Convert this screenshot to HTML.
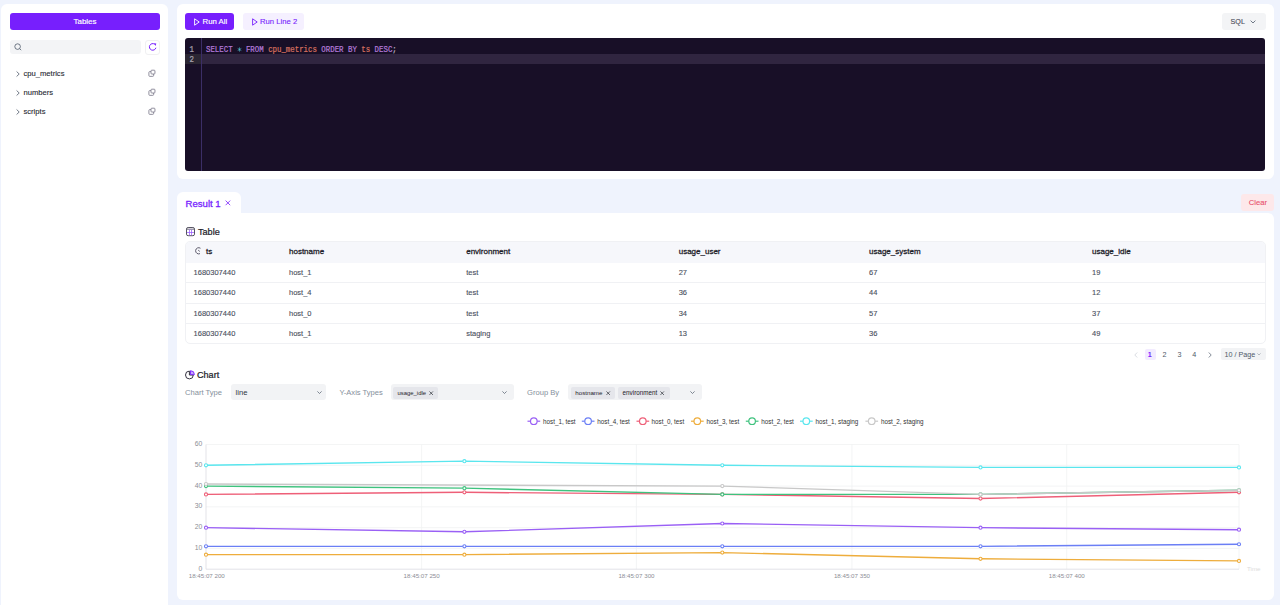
<!DOCTYPE html>
<html><head><meta charset="utf-8">
<style>
*{box-sizing:border-box;margin:0;padding:0}
html,body{width:1280px;height:605px;overflow:hidden;background:#eff3fd;font-family:"Liberation Sans",sans-serif;color:#1d2129}
.abs{position:absolute;white-space:nowrap}
.panel{position:absolute;background:#fff;border-radius:6px}
.btn{position:absolute;border-radius:3px;display:flex;align-items:center;justify-content:center;font-size:8px;white-space:nowrap}
.mono{font-family:"Liberation Mono",monospace}
.t{position:absolute;white-space:nowrap;line-height:1}
svg{position:absolute;overflow:visible}
.tree{position:absolute;left:23.5px;font-size:7.6px;color:#272a33;-webkit-text-stroke:0.12px #272a33;line-height:1}
.hl{position:absolute;height:1px;left:185px;width:1081px;background:#f0f1f4}
.c{position:absolute;font-size:7.5px;color:#4a5060;-webkit-text-stroke:0.12px #4a5060;line-height:1;white-space:nowrap}
.h{position:absolute;font-size:8px;color:#1d2129;-webkit-text-stroke:0.28px #1d2129;line-height:1;white-space:nowrap}
.kw{color:#b27ad9}.id{color:#d6705f}.op{color:#4fbfd0}.pn{color:#b7b2c0}
.lbl{position:absolute;font-size:7.6px;color:#86909c;line-height:1;white-space:nowrap;top:389px!important}
.sel{position:absolute;background:#f2f3f5;border-radius:3px;top:384px;height:16px}
.tag{position:absolute;background:#e5e6eb;border-radius:2px;top:386.6px;height:12.2px;font-size:5.9px;color:#1d2129;line-height:12.4px;padding-left:4.5px;white-space:nowrap}
.lg{position:absolute;top:418.8px;font-size:6.3px;color:#333;line-height:1;white-space:nowrap}
.ax{position:absolute;font-size:6.2px;color:#8c8e96;line-height:1;white-space:nowrap}
</style></head>
<body>
<!-- ============ SIDEBAR ============ -->
<div class="panel" style="left:1px;top:4px;width:167px;height:620px"></div>
<div class="btn" style="left:10px;top:13px;width:150px;height:17px;background:#771ffd;color:#fff;-webkit-text-stroke:0.15px #fff">Tables</div>
<div class="abs" style="left:10px;top:40px;width:131px;height:14px;background:#f3f4f6;border-radius:3px"></div>
<svg style="left:14px;top:43px" width="8" height="8" viewBox="0 0 8 8"><circle cx="3.6" cy="3.6" r="2.8" fill="none" stroke="#4e5969" stroke-width="0.8"/><path d="M5.6 5.6L7.2 7.2" stroke="#4e5969" stroke-width="0.8"/></svg>
<div class="abs" style="left:145.3px;top:39.5px;width:15.1px;height:15px;border:1px solid #f0f0f2;border-radius:3px;background:#fff"></div>
<svg style="left:149px;top:43px" width="8" height="8" viewBox="0 0 8 8"><path d="M6.9 4.75A3.3 3.3 0 1 1 5.6 1.2" fill="none" stroke="#771ffd" stroke-width="1"/><path d="M4.9 0.2L7.3 0.5L6.5 2.9Z" fill="#771ffd"/></svg>

<svg style="left:16px;top:71px" width="4" height="6" viewBox="0 0 4 6"><path d="M0.6 0.5L3.2 3L0.6 5.5" fill="none" stroke="#4e5969" stroke-width="0.8"/></svg>
<div class="tree" style="top:69.5px">cpu_metrics</div>
<svg style="left:16px;top:90px" width="4" height="6" viewBox="0 0 4 6"><path d="M0.6 0.5L3.2 3L0.6 5.5" fill="none" stroke="#4e5969" stroke-width="0.8"/></svg>
<div class="tree" style="top:88.8px">numbers</div>
<svg style="left:16px;top:109px" width="4" height="6" viewBox="0 0 4 6"><path d="M0.6 0.5L3.2 3L0.6 5.5" fill="none" stroke="#4e5969" stroke-width="0.8"/></svg>
<div class="tree" style="top:108px">scripts</div>
<svg style="left:147.5px;top:69px" width="8" height="8" viewBox="0 0 8 8"><rect x="3" y="1.2" width="3.95" height="3.8" rx="0.8" fill="none" stroke="#7d7b8c" stroke-width="0.85"/><path d="M3 2.6H1.7A0.8 0.8 0 0 0 0.9 3.4V6.55A0.8 0.8 0 0 0 1.7 7.35H4.8A0.8 0.8 0 0 0 5.6 6.55V5" fill="none" stroke="#7d7b8c" stroke-width="0.85"/></svg>
<svg style="left:147.5px;top:88px" width="8" height="8" viewBox="0 0 8 8"><rect x="3" y="1.2" width="3.95" height="3.8" rx="0.8" fill="none" stroke="#7d7b8c" stroke-width="0.85"/><path d="M3 2.6H1.7A0.8 0.8 0 0 0 0.9 3.4V6.55A0.8 0.8 0 0 0 1.7 7.35H4.8A0.8 0.8 0 0 0 5.6 6.55V5" fill="none" stroke="#7d7b8c" stroke-width="0.85"/></svg>
<svg style="left:147.5px;top:107px" width="8" height="8" viewBox="0 0 8 8"><rect x="3" y="1.2" width="3.95" height="3.8" rx="0.8" fill="none" stroke="#7d7b8c" stroke-width="0.85"/><path d="M3 2.6H1.7A0.8 0.8 0 0 0 0.9 3.4V6.55A0.8 0.8 0 0 0 1.7 7.35H4.8A0.8 0.8 0 0 0 5.6 6.55V5" fill="none" stroke="#7d7b8c" stroke-width="0.85"/></svg>

<!-- ============ EDITOR PANEL ============ -->
<div class="panel" style="left:177px;top:4px;width:1097px;height:174.5px"></div>
<div class="btn" style="left:185px;top:13px;width:49px;height:17px;background:#771ffd;color:#fff;"></div>
<svg style="left:193.5px;top:17.5px" width="6" height="8" viewBox="0 0 6 8"><path d="M0.6 0.8L5.2 4L0.6 7.2Z" fill="none" stroke="#fff" stroke-width="0.9" stroke-linejoin="round"/></svg>
<div class="t" style="left:202.5px;top:17.8px;font-size:7.8px;color:#fff;-webkit-text-stroke:0.15px #fff">Run All</div>
<div class="btn" style="left:243px;top:13px;width:61px;height:17px;background:#f5f0ff;"></div>
<svg style="left:251.5px;top:17.5px" width="6" height="8" viewBox="0 0 6 8"><path d="M0.6 0.8L5.2 4L0.6 7.2Z" fill="none" stroke="#771ffd" stroke-width="0.9" stroke-linejoin="round"/></svg>
<div class="t" style="left:260px;top:17.8px;font-size:7.7px;color:#771ffd;-webkit-text-stroke:0.12px #771ffd">Run Line 2</div>
<div class="btn" style="left:1222px;top:13px;width:44px;height:17px;background:#f3f4f6;"></div>
<div class="t" style="left:1230.5px;top:18.2px;font-size:7.2px;color:#4b4a5a;-webkit-text-stroke:0.12px #4b4a5a">SQL</div>
<svg style="left:1250px;top:19.5px" width="6" height="4" viewBox="0 0 6 4"><path d="M0.6 0.6L3 3L5.4 0.6" fill="none" stroke="#4e5969" stroke-width="0.8"/></svg>

<div class="abs" style="left:185px;top:38px;width:1080px;height:133px;background:#180f27;border-radius:3px;overflow:hidden">
  <div class="abs" style="left:0;top:15.8px;width:1081px;height:10.6px;background:#302540"></div>
  <div class="abs" style="left:0;top:15.8px;width:16px;height:10.6px;background:#2b2633"></div>
  <div class="abs" style="left:16px;top:0;width:1px;height:133px;background:#3b2e66"></div>
  <div class="t mono" style="left:4.6px;top:8.8px;font-size:7.4px;color:#a9a4b0;transform:scaleY(1.12);-webkit-text-stroke:0.2px #a9a4b0">1</div>
  <div class="t mono" style="left:4.6px;top:19.2px;font-size:7.4px;color:#a9a4b0;transform:scaleY(1.12);-webkit-text-stroke:0.2px #a9a4b0">2</div>
  <div class="t mono" style="left:21px;top:8.8px;font-size:7.4px;transform:scaleY(1.12);-webkit-text-stroke:0.2px currentColor;white-space:pre"><span class="kw">SELECT</span>   <span class="kw">FROM</span> <span class="id">cpu_metrics</span> <span class="kw">ORDER BY</span> <span class="id">ts</span> <span class="kw">DESC</span><span class="pn">;</span></div>
  <svg style="left:52px;top:8.6px" width="5" height="5" viewBox="0 0 10 10"><path d="M5 0.8V9.2M1.4 2.9L8.6 7.1M1.4 7.1L8.6 2.9" stroke="#4fbfd0" stroke-width="1.3"/></svg>
</div>

<!-- ============ RESULT TAB ============ -->
<div class="abs" style="left:177px;top:191.7px;width:64px;height:22px;background:#fff;border-radius:6px 6px 0 0"></div>
<div class="t" style="left:185.5px;top:198.6px;font-size:9.6px;color:#771ffd;-webkit-text-stroke:0.3px #771ffd">Result 1</div>
<svg style="left:225px;top:200.2px" width="6" height="6" viewBox="0 0 6 6"><path d="M0.6 0.6L5.2 5.2M5.2 0.6L0.6 5.2" stroke="#771ffd" stroke-width="0.8"/></svg>
<div class="btn" style="left:1240.5px;top:194px;width:33.5px;height:17px;background:#fde8ea;"></div>
<div class="t" style="left:1248.8px;top:198.8px;font-size:7.6px;color:#e9516f;-webkit-text-stroke:0.12px #e9516f">Clear</div>

<!-- ============ RESULTS PANEL ============ -->
<div class="panel" style="left:177px;top:213px;width:1097px;height:386.8px;border-radius:0 6px 6px 6px"></div>
<svg style="left:186px;top:227px" width="9" height="9" viewBox="0 0 9 9"><rect x="0.5" y="0.5" width="8" height="8.2" rx="1.6" fill="none" stroke="#4e4b5c" stroke-width="0.95"/><path d="M0.6 2.2H8.4" stroke="#4e4b5c" stroke-width="0.8"/><path d="M1 5.5H8M3.5 2.6V8.3M5.5 2.6V8.3" stroke="#9b5cff" stroke-width="0.75"/></svg>
<div class="t" style="left:198px;top:227.8px;font-size:9.1px;color:#1d2129;-webkit-text-stroke:0.22px #1d2129">Table</div>

<!-- table -->
<div class="abs" style="left:185px;top:241.3px;width:1081px;height:102.7px;border:1px solid #f0f1f4;border-radius:5px;overflow:hidden">
  <div class="abs" style="left:0;top:0;width:1081px;height:20.5px;background:#f6f7fb"></div>
</div>
<div class="hl" style="top:282.1px"></div>
<div class="hl" style="top:302.8px"></div>
<div class="hl" style="top:323.2px"></div>
<svg style="left:194.5px;top:247px" width="8" height="8" viewBox="0 0 8 8"><path d="M5.48 1.26A3.1 3.1 0 1 0 5.01 6.61" fill="none" stroke="#4e4b5c" stroke-width="0.9"/><path d="M3.1 3.1L4.9 4.5" stroke="#4e4b5c" stroke-width="0.8"/></svg>
<div class="h" style="left:206px;top:248px">ts</div>
<div class="h" style="left:289px;top:248px">hostname</div>
<div class="h" style="left:466.2px;top:248px">environment</div>
<div class="h" style="left:678.7px;top:248px">usage_user</div>
<div class="h" style="left:869px;top:248px">usage_system</div>
<div class="h" style="left:1092px;top:248px">usage_idle</div>

<div class="c" style="left:193.6px;top:268.6px">1680307440</div>
<div class="c" style="left:289px;top:268.6px">host_1</div>
<div class="c" style="left:466.2px;top:268.6px">test</div>
<div class="c" style="left:678.7px;top:268.6px">27</div>
<div class="c" style="left:869px;top:268.6px">67</div>
<div class="c" style="left:1092px;top:268.6px">19</div>

<div class="c" style="left:193.6px;top:289.2px">1680307440</div>
<div class="c" style="left:289px;top:289.2px">host_4</div>
<div class="c" style="left:466.2px;top:289.2px">test</div>
<div class="c" style="left:678.7px;top:289.2px">36</div>
<div class="c" style="left:869px;top:289.2px">44</div>
<div class="c" style="left:1092px;top:289.2px">12</div>

<div class="c" style="left:193.6px;top:309.7px">1680307440</div>
<div class="c" style="left:289px;top:309.7px">host_0</div>
<div class="c" style="left:466.2px;top:309.7px">test</div>
<div class="c" style="left:678.7px;top:309.7px">34</div>
<div class="c" style="left:869px;top:309.7px">57</div>
<div class="c" style="left:1092px;top:309.7px">37</div>

<div class="c" style="left:193.6px;top:330.2px">1680307440</div>
<div class="c" style="left:289px;top:330.2px">host_1</div>
<div class="c" style="left:466.2px;top:330.2px">staging</div>
<div class="c" style="left:678.7px;top:330.2px">13</div>
<div class="c" style="left:869px;top:330.2px">36</div>
<div class="c" style="left:1092px;top:330.2px">49</div>

<!-- pagination -->
<svg style="left:1134px;top:351.5px" width="4" height="6" viewBox="0 0 4 6"><path d="M3.2 0.5L0.8 3L3.2 5.5" fill="none" stroke="#c9cdd4" stroke-width="0.7"/></svg>
<div class="abs" style="left:1144.5px;top:348.5px;width:11.5px;height:11.5px;background:#f2ebff;border-radius:2px"></div>
<div class="t" style="left:1147.8px;top:350.8px;font-size:7.2px;color:#771ffd;font-weight:bold">1</div>
<div class="t" style="left:1162.5px;top:350.8px;font-size:7.2px;color:#4e5969">2</div>
<div class="t" style="left:1177.5px;top:350.8px;font-size:7.2px;color:#4e5969">3</div>
<div class="t" style="left:1192.3px;top:350.8px;font-size:7.2px;color:#4e5969">4</div>
<svg style="left:1208px;top:351.5px" width="4" height="6" viewBox="0 0 4 6"><path d="M0.8 0.5L3.2 3L0.8 5.5" fill="none" stroke="#4e5969" stroke-width="0.7"/></svg>
<div class="abs" style="left:1220.5px;top:348.3px;width:45px;height:12px;background:#f2f3f5;border-radius:2px"></div>
<div class="t" style="left:1224.5px;top:350.8px;font-size:7.2px;color:#4e5969">10 / Page</div>
<svg style="left:1257px;top:353px" width="4" height="3" viewBox="0 0 4 3"><path d="M0.4 0.4L2 2L3.6 0.4" fill="none" stroke="#86909c" stroke-width="0.6"/></svg>

<!-- ============ CHART ============ -->
<svg style="left:185px;top:369.5px" width="11" height="11" viewBox="0 0 11 11"><path d="M4.4 1.1A3.9 3.9 0 1 0 8.3 5H4.4Z" fill="none" stroke="#2b2838" stroke-width="0.95" stroke-linejoin="round"/><path d="M5.5 4.6V0.7A3.9 3.9 0 0 1 9.4 4.6Z" fill="#c8a6ff" stroke="#771ffd" stroke-width="0.9" stroke-linejoin="round"/></svg>
<div class="t" style="left:197px;top:370.7px;font-size:9.1px;color:#1d2129;-webkit-text-stroke:0.22px #1d2129">Chart</div>

<div class="lbl" style="left:185px;top:388.3px">Chart Type</div>
<div class="sel" style="left:231.2px;width:95px"></div>
<div class="t" style="left:235.6px;top:389px;font-size:7.6px;color:#2f3340">line</div>
<svg style="left:316.5px;top:390.5px" width="5" height="3" viewBox="0 0 5 3"><path d="M0.4 0.4L2.5 2.5L4.6 0.4" fill="none" stroke="#4e5969" stroke-width="0.7"/></svg>

<div class="lbl" style="left:339.4px;top:388.3px">Y-Axis Types</div>
<div class="sel" style="left:390.6px;width:123.4px"></div>
<div class="tag" style="left:393px;width:45.3px">usage_idle</div>
<svg style="left:429.2px;top:390.6px" width="4.4" height="4.4" viewBox="0 0 5 5"><path d="M0.5 0.5L4.5 4.5M4.5 0.5L0.5 4.5" stroke="#1d2129" stroke-width="0.75"/></svg>
<svg style="left:501.9px;top:390.5px" width="5" height="3" viewBox="0 0 5 3"><path d="M0.4 0.4L2.5 2.5L4.6 0.4" fill="none" stroke="#4e5969" stroke-width="0.7"/></svg>

<div class="lbl" style="left:527px;top:388.3px">Group By</div>
<div class="sel" style="left:568.1px;width:133.9px"></div>
<div class="tag" style="left:570.8px;width:44.5px;font-size:6.2px">hostname</div>
<svg style="left:605.7px;top:390.6px" width="4.4" height="4.4" viewBox="0 0 5 5"><path d="M0.5 0.5L4.5 4.5M4.5 0.5L0.5 4.5" stroke="#1d2129" stroke-width="0.75"/></svg>
<div class="tag" style="left:618.1px;width:52.2px;font-size:6.3px">environment</div>
<svg style="left:660.3px;top:390.6px" width="4.4" height="4.4" viewBox="0 0 5 5"><path d="M0.5 0.5L4.5 4.5M4.5 0.5L0.5 4.5" stroke="#1d2129" stroke-width="0.75"/></svg>
<svg style="left:690px;top:390.5px" width="5" height="3" viewBox="0 0 5 3"><path d="M0.4 0.4L2.5 2.5L4.6 0.4" fill="none" stroke="#4e5969" stroke-width="0.7"/></svg>

<!-- legend -->
<svg style="left:0;top:0" width="1280" height="605" viewBox="0 0 1280 605">
  <g stroke-width="1.2" fill="#fff">
    <path d="M527.5 421.2H540.2" stroke="#9a60f5"/><circle cx="533.8" cy="421.2" r="3.3" stroke="#9a60f5"/>
    <path d="M581.8 421.2H594.5" stroke="#6b7ff5"/><circle cx="588.1" cy="421.2" r="3.3" stroke="#6b7ff5"/>
    <path d="M636.5 421.2H649.2" stroke="#ee5f78"/><circle cx="642.8" cy="421.2" r="3.3" stroke="#ee5f78"/>
    <path d="M691 421.2H703.7" stroke="#eead3c"/><circle cx="697.3" cy="421.2" r="3.3" stroke="#eead3c"/>
    <path d="M745.8 421.2H758.5" stroke="#3fc27e"/><circle cx="752.1" cy="421.2" r="3.3" stroke="#3fc27e"/>
    <path d="M800 421.2H812.7" stroke="#5ae6ee"/><circle cx="806.3" cy="421.2" r="3.3" stroke="#5ae6ee"/>
    <path d="M865.4 421.2H878.1" stroke="#c8c8c8"/><circle cx="871.7" cy="421.2" r="3.3" stroke="#c8c8c8"/>
  </g>
</svg>
<div class="lg" style="left:543px">host_1, test</div>
<div class="lg" style="left:597.3px">host_4, test</div>
<div class="lg" style="left:651.6px">host_0, test</div>
<div class="lg" style="left:706.6px">host_3, test</div>
<div class="lg" style="left:761.3px">host_2, test</div>
<div class="lg" style="left:815.6px">host_1, staging</div>
<div class="lg" style="left:880.9px">host_2, staging</div>

<!-- chart plot -->
<svg id="plot" style="left:0;top:0" width="1280" height="605" viewBox="0 0 1280 605">
  <g stroke="#f0f1f3" stroke-width="0.8">
    <path d="M206 548.42H1239M206 527.64H1239M206 506.86H1239M206 486.08H1239M206 465.3H1239M206 444.52H1239"/>
    <path d="M421.6 444.52V569.2M636.4 444.52V569.2M851.9 444.52V569.2M1066.7 444.52V569.2M1239 444.52V569.2"/>
  </g>
  <path d="M1239 569.2H206V444.52" fill="none" stroke="#dcdce2" stroke-width="0.8"/>
  <g><polyline fill="none" stroke-width="1.4" stroke-linejoin="round" stroke="#9a60f5" points="206,527.64 464.4,531.8 722.3,523.48 980.5,527.64 1239,529.72"/>
    <circle cx="206" cy="527.64" r="1.55" fill="#fff" stroke-width="1.1" stroke="#9a60f5"/>
    <circle cx="464.4" cy="531.8" r="1.55" fill="#fff" stroke-width="1.1" stroke="#9a60f5"/>
    <circle cx="722.3" cy="523.48" r="1.55" fill="#fff" stroke-width="1.1" stroke="#9a60f5"/>
    <circle cx="980.5" cy="527.64" r="1.55" fill="#fff" stroke-width="1.1" stroke="#9a60f5"/>
    <circle cx="1239" cy="529.72" r="1.55" fill="#fff" stroke-width="1.1" stroke="#9a60f5"/>
  </g>
  <g><polyline fill="none" stroke-width="1.4" stroke-linejoin="round" stroke="#6b7ff5" points="206,546.34 464.4,546.34 722.3,546.34 980.5,546.34 1239,544.26"/>
    <circle cx="206" cy="546.34" r="1.55" fill="#fff" stroke-width="1.1" stroke="#6b7ff5"/>
    <circle cx="464.4" cy="546.34" r="1.55" fill="#fff" stroke-width="1.1" stroke="#6b7ff5"/>
    <circle cx="722.3" cy="546.34" r="1.55" fill="#fff" stroke-width="1.1" stroke="#6b7ff5"/>
    <circle cx="980.5" cy="546.34" r="1.55" fill="#fff" stroke-width="1.1" stroke="#6b7ff5"/>
    <circle cx="1239" cy="544.26" r="1.55" fill="#fff" stroke-width="1.1" stroke="#6b7ff5"/>
  </g>
  <g><polyline fill="none" stroke-width="1.4" stroke-linejoin="round" stroke="#ee5f78" points="206,494.39 464.4,492.31 722.3,494.39 980.5,498.55 1239,492.31"/>
    <circle cx="206" cy="494.39" r="1.55" fill="#fff" stroke-width="1.1" stroke="#ee5f78"/>
    <circle cx="464.4" cy="492.31" r="1.55" fill="#fff" stroke-width="1.1" stroke="#ee5f78"/>
    <circle cx="722.3" cy="494.39" r="1.55" fill="#fff" stroke-width="1.1" stroke="#ee5f78"/>
    <circle cx="980.5" cy="498.55" r="1.55" fill="#fff" stroke-width="1.1" stroke="#ee5f78"/>
    <circle cx="1239" cy="492.31" r="1.55" fill="#fff" stroke-width="1.1" stroke="#ee5f78"/>
  </g>
  <g><polyline fill="none" stroke-width="1.4" stroke-linejoin="round" stroke="#eead3c" points="206,554.65 464.4,554.65 722.3,552.58 980.5,558.81 1239,560.89"/>
    <circle cx="206" cy="554.65" r="1.55" fill="#fff" stroke-width="1.1" stroke="#eead3c"/>
    <circle cx="464.4" cy="554.65" r="1.55" fill="#fff" stroke-width="1.1" stroke="#eead3c"/>
    <circle cx="722.3" cy="552.58" r="1.55" fill="#fff" stroke-width="1.1" stroke="#eead3c"/>
    <circle cx="980.5" cy="558.81" r="1.55" fill="#fff" stroke-width="1.1" stroke="#eead3c"/>
    <circle cx="1239" cy="560.89" r="1.55" fill="#fff" stroke-width="1.1" stroke="#eead3c"/>
  </g>
  <g><polyline fill="none" stroke-width="1.4" stroke-linejoin="round" stroke="#3fc27e" points="206,486.08 464.4,488.16 722.3,494.39 980.5,494.39 1239,490.24"/>
    <circle cx="206" cy="486.08" r="1.55" fill="#fff" stroke-width="1.1" stroke="#3fc27e"/>
    <circle cx="464.4" cy="488.16" r="1.55" fill="#fff" stroke-width="1.1" stroke="#3fc27e"/>
    <circle cx="722.3" cy="494.39" r="1.55" fill="#fff" stroke-width="1.1" stroke="#3fc27e"/>
    <circle cx="980.5" cy="494.39" r="1.55" fill="#fff" stroke-width="1.1" stroke="#3fc27e"/>
    <circle cx="1239" cy="490.24" r="1.55" fill="#fff" stroke-width="1.1" stroke="#3fc27e"/>
  </g>
  <g><polyline fill="none" stroke-width="1.4" stroke-linejoin="round" stroke="#5ae6ee" points="206,465.3 464.4,461.14 722.3,465.3 980.5,467.38 1239,467.38"/>
    <circle cx="206" cy="465.3" r="1.55" fill="#fff" stroke-width="1.1" stroke="#5ae6ee"/>
    <circle cx="464.4" cy="461.14" r="1.55" fill="#fff" stroke-width="1.1" stroke="#5ae6ee"/>
    <circle cx="722.3" cy="465.3" r="1.55" fill="#fff" stroke-width="1.1" stroke="#5ae6ee"/>
    <circle cx="980.5" cy="467.38" r="1.55" fill="#fff" stroke-width="1.1" stroke="#5ae6ee"/>
    <circle cx="1239" cy="467.38" r="1.55" fill="#fff" stroke-width="1.1" stroke="#5ae6ee"/>
  </g>
  <g><polyline fill="none" stroke-width="1.4" stroke-linejoin="round" stroke="#c8c8c8" points="206,484.0 722.3,486.08 980.5,494.39 1239,490.24"/>
    <circle cx="206" cy="484.0" r="1.55" fill="#fff" stroke-width="1.1" stroke="#c8c8c8"/>
    <circle cx="722.3" cy="486.08" r="1.55" fill="#fff" stroke-width="1.1" stroke="#c8c8c8"/>
    <circle cx="980.5" cy="494.39" r="1.55" fill="#fff" stroke-width="1.1" stroke="#c8c8c8"/>
    <circle cx="1239" cy="490.24" r="1.55" fill="#fff" stroke-width="1.1" stroke="#c8c8c8"/>
  </g>
</svg>
<div class="ax" style="right:1077.8px;top:441.12px;font-size:6.8px">60</div>
<div class="ax" style="right:1077.8px;top:461.90px;font-size:6.8px">50</div>
<div class="ax" style="right:1077.8px;top:482.68px;font-size:6.8px">40</div>
<div class="ax" style="right:1077.8px;top:503.46px;font-size:6.8px">30</div>
<div class="ax" style="right:1077.8px;top:524.24px;font-size:6.8px">20</div>
<div class="ax" style="right:1077.8px;top:545.02px;font-size:6.8px">10</div>
<div class="ax" style="right:1077.8px;top:565.80px;font-size:6.8px">0</div>
<div class="ax" style="left:188.7px;top:573px;width:36px;text-align:center">18:45:07 200</div>
<div class="ax" style="left:403.6px;top:573px;width:36px;text-align:center">18:45:07 250</div>
<div class="ax" style="left:618.4px;top:573px;width:36px;text-align:center">18:45:07 300</div>
<div class="ax" style="left:833.9px;top:573px;width:36px;text-align:center">18:45:07 350</div>
<div class="ax" style="left:1048.7px;top:573px;width:36px;text-align:center">18:45:07 400</div>
<div class="ax" style="left:1247px;top:565.6px;color:#dcdcdc">Time</div>

</body></html>
